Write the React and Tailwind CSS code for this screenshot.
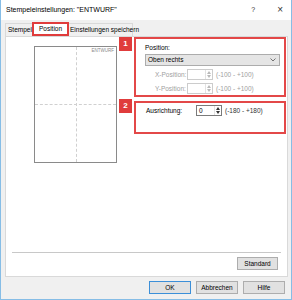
import React from "react";

const font = { fontFamily: '"Liberation Sans", Arial, sans-serif' };

function Spin({ value = "", disabled = false }) {
  const c = disabled ? "#b9b9b9" : "#333333";
  return (
    <div className={`flex h-[11px] w-[26px] border ${disabled ? "border-[#cccccc]" : "border-[#7a7a7a]"} bg-white`}>
      <div className="flex-1 pl-[2px] text-[6.5px] leading-[9px] text-black">{value}</div>
      <div className="flex w-[7px] flex-col items-center justify-center gap-[1px] border-l border-[#e3e3e3]">
        <svg width="4" height="3" viewBox="0 0 4 3"><path d="M0 3 L2 0 L4 3 Z" fill={c} /></svg>
        <svg width="4" height="3" viewBox="0 0 4 3"><path d="M0 0 L2 3 L4 0 Z" fill={c} /></svg>
      </div>
    </div>
  );
}

function Badge({ n }) {
  return (
    <div className="flex h-[14px] w-[13px] shrink-0 items-center justify-center bg-[#e03c3c] text-[8px] font-bold text-white">
      {n}
    </div>
  );
}

function Btn({ children, def = false, w = "w-[42px]" }) {
  return (
    <div className={`flex h-[13px] ${w} items-center justify-center border ${def ? "border-[#3c8fd8]" : "border-[#adadad]"} bg-[#e1e1e1] text-[6.5px] text-black`}>
      {children}
    </div>
  );
}

export default function App() {
  return (
    <div className="flex h-[300px] w-[292px] flex-col whitespace-nowrap border-x border-b border-[#86bde6] bg-white" style={font}>
      {/* title bar */}
      <div className="flex h-[20px] items-center bg-white pl-[5px] pr-[8px]">
        <span className="text-[7px] text-black">Stempeleinstellungen: "ENTWURF"</span>
        <span className="ml-auto text-[7px] text-[#333]">?</span>
        <span className="ml-[22px] text-[10px] font-light leading-none text-[#333]">×</span>
      </div>

      <div className="flex flex-1 flex-col bg-[#f0f0f0]">
        {/* tabs */}
        <div className="flex h-[16px] items-end px-[4px]">
          <div className="flex h-[13px] w-[27px] items-center overflow-hidden border-l border-t border-[#d9d9d9] pl-[2px] text-[6.5px] text-black">
            Stempel
          </div>
          <div className="flex h-[14px] w-[37px] items-center justify-center border-2 border-[#e03c3c] bg-white text-[6.5px] text-black">
            Position
          </div>
          <div className="flex h-[13px] w-[64px] items-center border-r border-t border-[#d9d9d9] pl-[1px] text-[6.5px] text-black">
            Einstellungen speichern
          </div>
        </div>

        {/* panel */}
        <div className="ml-[4px] flex h-[241px] w-[283px] flex-col border border-[#d9d9d9] bg-white">
          <div className="flex items-start">
            <div className="relative ml-[28px] mt-[9px] h-[117px] w-[83px] border border-[#8a8a8a] bg-white">
              <div className="absolute bottom-0 left-[41px] top-0 border-l border-dashed border-[#d0d0d0]" />
              <div className="absolute left-0 right-0 top-[57px] border-t border-dashed border-[#d0d0d0]" />
              <div className="absolute right-[2px] top-[1px] text-[4.5px] text-[#888]">ENTWURF</div>
            </div>

            <div className="ml-[2px] flex flex-col">
              <div className="flex items-start gap-[2px]">
                <Badge n="1" />
                <div className="flex h-[60px] w-[152px] flex-col border-2 border-[#e34848] pl-[9px] pt-[5px]">
                  <div className="text-[6.5px] leading-[7px] text-black">Position:</div>
                  <div className="mt-[3px] flex h-[12px] w-[135px] items-center border border-[#acacac] bg-[#e5e5e5] pl-[2px] pr-[3px]">
                    <span className="text-[6.5px] text-black">Oben rechts</span>
                    <svg className="ml-auto" width="6" height="4" viewBox="0 0 6 4">
                      <path d="M0.5 0.5 L3 3 L5.5 0.5" fill="none" stroke="#555" strokeWidth="0.8" />
                    </svg>
                  </div>
                  <div className="mt-[3px] flex items-center">
                    <span className="w-[42px] pl-[10px] text-[6.5px] text-[#a0a0a0]">X-Position:</span>
                    <Spin disabled />
                    <span className="ml-[3px] text-[6.5px] text-[#a0a0a0]">(-100 - +100)</span>
                  </div>
                  <div className="mt-[3px] flex items-center">
                    <span className="w-[42px] pl-[10px] text-[6.5px] text-[#a0a0a0]">Y-Position:</span>
                    <Spin disabled />
                    <span className="ml-[3px] text-[6.5px] text-[#a0a0a0]">(-100 - +100)</span>
                  </div>
                </div>
              </div>

              <div className="mt-[2px] flex items-start gap-[2px]">
                <Badge n="2" />
                <div className="mt-[2px] flex h-[33px] w-[152px] flex-col border-2 border-[#e34848] pl-[10px] pt-[2px]">
                  <div className="flex items-center">
                    <span className="w-[50px] text-[6.5px] text-black">Ausrichtung:</span>
                    <Spin value="0" />
                    <span className="ml-[3px] text-[6.5px] text-[#333]">(-180 - +180)</span>
                  </div>
                </div>
              </div>
            </div>
          </div>

          <div className="mx-[6px] mt-auto border-t border-[#c8c8c8]" />
          <div className="flex justify-end pb-[6px] pr-[9px] pt-[4px]">
            <Btn w="w-[41px]">Standard</Btn>
          </div>
        </div>

        {/* footer */}
        <div className="flex justify-end gap-[5px] pr-[6px] pt-[4px]">
          <Btn def>OK</Btn>
          <Btn>Abbrechen</Btn>
          <Btn>Hilfe</Btn>
        </div>
      </div>
    </div>
  );
}
